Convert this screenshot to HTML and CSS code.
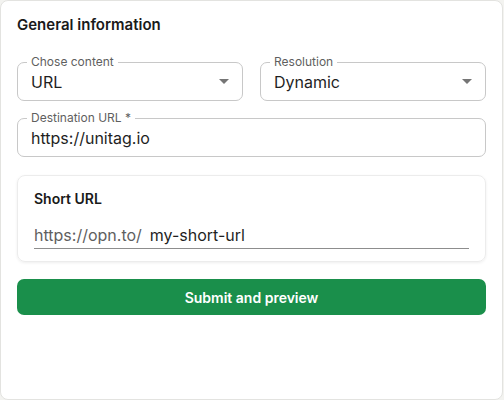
FILE: index.html
```html
<!DOCTYPE html>
<html>
<head>
<meta charset="utf-8">
<link rel="stylesheet" href="styles.css">
</head>
<body>
<div class="card">
  <h2 class="title">General information</h2>
  <div class="row">
    <div class="field select">
      <span class="label">Chose content</span>
      <span class="value">URL</span>
      <span class="arrow"></span>
    </div>
    <div class="field select">
      <span class="label">Resolution</span>
      <span class="value">Dynamic</span>
      <span class="arrow"></span>
    </div>
  </div>
  <div class="field">
    <span class="label">Destination URL *</span>
    <span class="value">https://unitag.io</span>
  </div>
  <div class="short">
    <div class="short-title">Short URL</div>
    <div class="short-input">
      <span class="prefix">https://opn.to/</span>
      <span class="slug">my-short-url</span>
    </div>
  </div>
  <button class="submit">Submit and preview</button>
</div>
</body>
</html>
```
FILE: styles.css
```css
* { box-sizing: border-box; }
html, body { margin: 0; padding: 0; background: #f3f3f0; }
body { font-family: Inter, "Noto Sans", "Liberation Sans", sans-serif; color: #1f1f1f; }
.card {
  width: 503px;
  height: 400px;
  background: #fff;
  border: 1px solid #e3e3e0;
  border-radius: 8px;
  padding: 14px 16px 0 16px;
  display: flex;
  flex-direction: column;
}
.title {
  margin: 0;
  font-size: 15px;
  line-height: 20px;
  font-weight: 600;
  color: #1a1a1a;
}
.row {
  display: grid;
  grid-template-columns: 1fr 1fr;
  gap: 17px;
  margin-top: 27px;
}
.field {
  position: relative;
  height: 39px;
  border: 1px solid #c8c8c8;
  border-radius: 7px;
  display: flex;
  align-items: center;
  padding: 0 13px;
}
.row + .field { margin-top: 17px; }
.label {
  position: absolute;
  left: 9px;
  top: -8px;
  padding: 0 4px;
  background: #fff;
  font-size: 12px;
  line-height: 14px;
  color: #5f5f5f;
}
.value {
  font-size: 16px;
  line-height: 20px;
  color: #1f1f1f;
  flex: 1;
}
.arrow {
  width: 0;
  height: 0;
  border-left: 5px solid transparent;
  border-right: 5px solid transparent;
  border-top: 5px solid #757575;
}
.short {
  margin-top: 18px;
  border: 1px solid #ececec;
  border-radius: 8px;
  box-shadow: 0 1px 3px rgba(0,0,0,0.07);
  padding: 14px 16px 9px 16px;
  height: 87px;
}
.short-title {
  font-size: 14px;
  line-height: 18px;
  font-weight: 600;
  color: #1a1a1a;
}
.short-input {
  margin-top: 17px;
  border-bottom: 1px solid #8d8d8d;
  display: flex;
  align-items: baseline;
  padding-bottom: 3px;
}
.prefix {
  font-size: 16px;
  line-height: 20px;
  color: #5f5f5f;
}
.slug {
  margin-left: 8px;
  font-size: 16px;
  line-height: 20px;
  color: #1f1f1f;
}
.submit {
  margin-top: 17px;
  height: 36px;
  border: none;
  border-radius: 7px;
  background: #1a8f4b;
  color: #fff;
  font-family: inherit;
  font-size: 14px;
  font-weight: 600;
}
```
